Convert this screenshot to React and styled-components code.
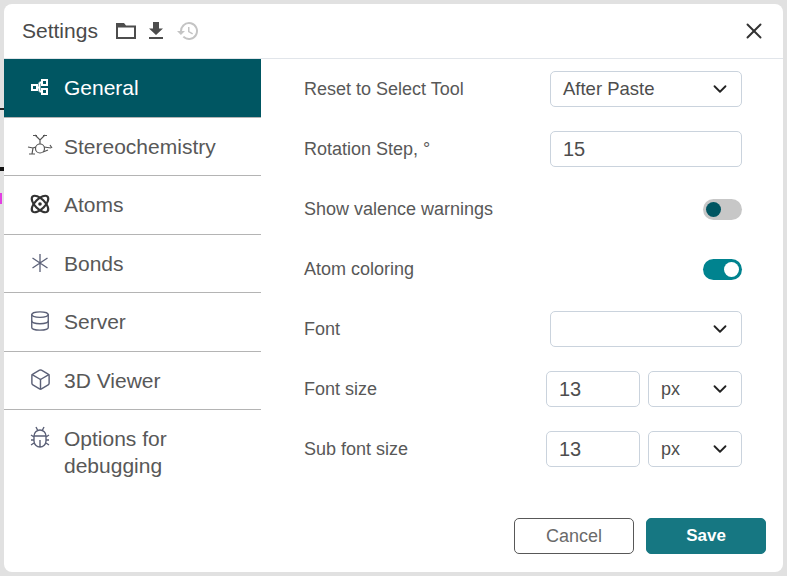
import React from "react";
import styled, { createGlobalStyle } from "styled-components";
import { ChevronDown, X, Database, Box } from "lucide-react";

const GlobalStyle = createGlobalStyle`
  html, body {
    margin: 0;
    padding: 0;
    background: #e1e1e1;
    font-family: "Liberation Sans", Arial, sans-serif;
  }
`;

const Backdrop = styled.div`
  width: 787px;
  height: 576px;
  box-sizing: border-box;
  padding: 4px;
  background: #e1e1e1;
  position: relative;
  overflow: hidden;
`;

const Speck = styled.div`
  position: absolute;
  left: 0;
  top: ${(props) => props.top}px;
  width: ${(props) => props.w}px;
  height: ${(props) => props.h}px;
  background: ${(props) => props.color};
`;

const Dialog = styled.div`
  width: 779px;
  height: 568px;
  background: #fff;
  border-radius: 8px;
  display: flex;
  flex-direction: column;
  overflow: hidden;
  position: relative;
`;

const Header = styled.header`
  height: 55px;
  flex: none;
  box-sizing: border-box;
  border-bottom: 1px solid #e1e5ea;
  display: flex;
  align-items: center;
  padding: 0 16px 0 18px;
  color: #4d4d4d;
`;

const Title = styled.h1`
  margin: 0 17px 0 0;
  font-size: 21px;
  font-weight: 400;
  color: #4a4a4a;
`;

const HeaderIcon = styled.button`
  border: 0;
  background: none;
  padding: 0;
  margin-right: ${(props) => props.gap || 0}px;
  width: 22px;
  height: 22px;
  color: ${(props) => (props.disabled ? "#c4c4c4" : "#4d4d4d")};
  display: flex;
  align-items: center;
  justify-content: center;
`;

const CloseButton = styled.button`
  border: 0;
  background: none;
  padding: 0;
  margin-left: auto;
  color: #333;
  display: flex;
`;

const Body = styled.div`
  flex: 1;
  display: flex;
  min-height: 0;
`;

const Sidebar = styled.nav`
  width: 257px;
  flex: none;
`;

const TabItem = styled.div`
  box-sizing: border-box;
  height: ${(props) => props.h || 58.5}px;
  display: flex;
  align-items: flex-start;
  padding: 15px 30px 0 24px;
  border-bottom: ${(props) => (props.last ? "0" : "1px solid #b4b4b4")};
  background: ${(props) => (props.active ? "#005662" : "transparent")};
  color: ${(props) => (props.active ? "#fff" : "#585858")};
  font-size: 21px;
  line-height: 27px;
`;

const TabIcon = styled.span`
  width: 24px;
  height: 24px;
  margin: 1px 12px 0 0;
  flex: none;
  display: flex;
  align-items: center;
  justify-content: center;
  color: ${(props) => (props.active ? "#fff" : "#5b6077")};
`;

const Content = styled.div`
  flex: 1;
  display: flex;
  flex-direction: column;
  padding: 0 41px 0 43px;
  min-width: 0;
`;

const Fields = styled.div`
  flex: 1;
`;

const Row = styled.div`
  height: 60px;
  display: flex;
  align-items: center;
  justify-content: space-between;
  color: #585858;
  font-size: 18px;
`;

const Control = styled.div`
  box-sizing: border-box;
  width: ${(props) => props.w || 192}px;
  height: 36px;
  border: 1px solid #cad3dd;
  border-radius: 5px;
  display: flex;
  align-items: center;
  justify-content: space-between;
  padding: 0 10px 0 12px;
  font-size: ${(props) => props.size || 20}px;
  color: #4d4d4d;
  background: #fff;
`;

const Pair = styled.div`
  display: flex;
  gap: 8px;
`;

const Toggle = styled.div`
  width: 39px;
  height: 21px;
  border-radius: 11px;
  box-sizing: border-box;
  background: ${(props) => (props.on ? "#00838f" : "#c7c7c7")};
  display: flex;
  align-items: center;
  justify-content: ${(props) => (props.on ? "flex-end" : "flex-start")};
  padding: 0 3px;
`;

const Knob = styled.span`
  width: 15px;
  height: 15px;
  border-radius: 50%;
  background: ${(props) => (props.on ? "#fff" : "#005662")};
`;

const Footer = styled.footer`
  height: 36px;
  margin: 0 -24px 18px 0;
  display: flex;
  justify-content: flex-end;
  gap: 12px;
`;

const Button = styled.button`
  box-sizing: border-box;
  width: 120px;
  height: 36px;
  border-radius: 5px;
  font-family: inherit;
  font-size: ${(props) => (props.primary ? 17 : 18)}px;
  font-weight: ${(props) => (props.primary ? 700 : 400)};
  border: 1px solid ${(props) => (props.primary ? "#167782" : "#585858")};
  background: ${(props) => (props.primary ? "#167782" : "#fff")};
  color: ${(props) => (props.primary ? "#fff" : "#6a6a6a")};
`;

const FolderIcon = () => (
  <svg width="22" height="20" viewBox="0 0 22 20" fill="currentColor">
    <path d="M1 2h8l2 2.500h10V18H1zM3 6.500V16h16V6.500z" fillRule="evenodd" />
  </svg>
);

const DownloadIcon = () => (
  <svg width="16" height="20" viewBox="0 0 16 20" fill="currentColor">
    <path d="M5 1h6v6.500h4L8 14 1 7.500h4zM1 16h14v2H1z" />
  </svg>
);

const HistoryIcon = () => (
  <svg width="24" height="24" viewBox="0 0 24 24" fill="currentColor" style={{ flex: "none" }}>
    <path d="M13 3a9 9 0 0 0-9 9H1l3.900 3.900L9 12H6a7 7 0 1 1 2.050 4.950l-1.420 1.420A9 9 0 1 0 13 3zm-1 5v5l4.250 2.520.77-1.280-3.520-2.090V8z" />
  </svg>
);

const GeneralIcon = () => (
  <svg width="20" height="20" viewBox="0 0 20 20" fill="none" stroke="currentColor" strokeWidth="2">
    <rect x="2" y="8" width="5" height="5" />
    <rect x="12" y="3" width="5" height="5" />
    <rect x="12" y="12" width="5" height="5" />
    <path d="M7 10.500h2.500M9.500 5.500V14.500M9.500 5.500H12M9.500 14.500H12" />
  </svg>
);

const StereoIcon = () => (
  <svg width="28" height="28" viewBox="0 0 28 28" fill="none" stroke="#555" strokeWidth="1.200" style={{ flex: "none" }}>
    <path d="M9 3l5 5 5-5M7 3.500l4 0M17 3.500h4M14 8v4M10 15l-3 1-1 6M2 15l5 1M3 22h6M18 15l7 1M24 13l2 3M17 20l5-2" />
    <circle cx="14" cy="16.500" r="4.500" />
  </svg>
);

const AtomIcon = () => (
  <svg width="22" height="22" viewBox="0 0 22 22" fill="none" stroke="#333" strokeWidth="2.200">
    <ellipse cx="11" cy="11" rx="10.500" ry="5" transform="rotate(45 11 11)" />
    <ellipse cx="11" cy="11" rx="10.500" ry="5" transform="rotate(-45 11 11)" />
    <circle cx="11" cy="11" r="1.800" fill="#333" stroke="none" />
  </svg>
);

const BondsIcon = () => (
  <svg width="20" height="20" viewBox="0 0 20 20" fill="none" stroke="currentColor" strokeWidth="1.300">
    <path d="M10 1v18M2.500 5l15 10M17.500 5l-15 10" />
  </svg>
);

const BugIcon = () => (
  <svg width="20" height="24" viewBox="0 0 20 24" fill="none" stroke="currentColor" strokeWidth="1.400">
    <path d="M4 10a6 6 0 0 1 12 0v5a6 6 0 0 1-12 0zM4 10h12M10 14v7M6 1l2 4M14 1l-2 4M1 9l3 2M19 9l-3 2M1 14h3M19 14h-3M1 19l3-2M19 19l-3-2" />
  </svg>
);

const tabs = [
  { label: "General", icon: <GeneralIcon />, active: true },
  { label: "Stereochemistry", icon: <StereoIcon /> },
  { label: "Atoms", icon: <AtomIcon /> },
  { label: "Bonds", icon: <BondsIcon /> },
  { label: "Server", icon: <Database size={22} strokeWidth={1.500} /> },
  { label: "3D Viewer", icon: <Box size={23} strokeWidth={1.500} /> },
  { label: "Options for debugging", icon: <BugIcon />, last: true, h: 100 },
];

const Select = ({ value, w }) => (
  <Control w={w} size={value === "px" ? 18 : 18.500}>
    <span>{value}</span>
    <ChevronDown size={22} strokeWidth={2} color="#222" />
  </Control>
);

const App = () => {
  return (
    <Backdrop>
      <GlobalStyle />
      <Speck top={108} w={4} h={2} color="#222" />
      <Speck top={167} w={4} h={4} color="#111" />
      <Speck top={193} w={2} h={11} color="#e23fe2" />
      <Dialog>
        <Header>
          <Title>Settings</Title>
          <HeaderIcon gap={8}><FolderIcon /></HeaderIcon>
          <HeaderIcon gap={10}><DownloadIcon /></HeaderIcon>
          <HeaderIcon disabled><HistoryIcon /></HeaderIcon>
          <CloseButton><X size={26} strokeWidth={1.800} /></CloseButton>
        </Header>
        <Body>
          <Sidebar>
            {tabs.map((tab) => (
              <TabItem key={tab.label} active={tab.active} last={tab.last} h={tab.h}>
                <TabIcon active={tab.active}>{tab.icon}</TabIcon>
                <span>{tab.label}</span>
              </TabItem>
            ))}
          </Sidebar>
          <Content>
            <Fields>
              <Row>
                Reset to Select Tool
                <Select value="After Paste" />
              </Row>
              <Row>
                Rotation Step, °
                <Control>15</Control>
              </Row>
              <Row>
                Show valence warnings
                <Toggle><Knob /></Toggle>
              </Row>
              <Row>
                Atom coloring
                <Toggle on><Knob on /></Toggle>
              </Row>
              <Row>
                Font
                <Select value="" />
              </Row>
              <Row>
                Font size
                <Pair>
                  <Control w={94}>13</Control>
                  <Select value="px" w={94} />
                </Pair>
              </Row>
              <Row>
                Sub font size
                <Pair>
                  <Control w={94}>13</Control>
                  <Select value="px" w={94} />
                </Pair>
              </Row>
            </Fields>
            <Footer>
              <Button>Cancel</Button>
              <Button primary>Save</Button>
            </Footer>
          </Content>
        </Body>
      </Dialog>
    </Backdrop>
  );
};

export default App;
